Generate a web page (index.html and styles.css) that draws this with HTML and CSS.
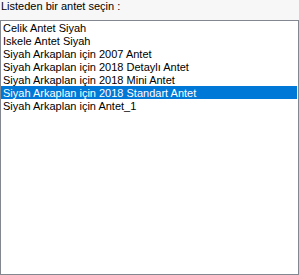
FILE: index.html
```html
<!DOCTYPE html>
<html lang="tr">
<head>
    <meta charset="UTF-8">
    <title>Antet Seçimi</title>
    <link rel="stylesheet" href="styles.css">
</head>
<body>
    <div class="panel">
        <div class="caption">Listeden bir antet seçin :</div>
        <ul class="listbox">
            <li>Celik Antet Siyah</li>
            <li>Iskele Antet Siyah</li>
            <li>Siyah Arkaplan için 2007 Antet</li>
            <li>Siyah Arkaplan için 2018 Detaylı Antet</li>
            <li>Siyah Arkaplan için 2018 Mini Antet</li>
            <li class="selected">Siyah Arkaplan için 2018 Standart Antet</li>
            <li>Siyah Arkaplan için Antet_1</li>
        </ul>
    </div>
</body>
</html>
```

FILE: styles.css
```css
body {
    margin: 0;
    background-color: #f7f7f7;
    font-family: "Liberation Sans", Arial, sans-serif;
    font-size: 11px;
    color: #000;
}
.panel {
    width: 299px;
    height: 275px;
    display: flex;
    flex-direction: column;
}
.caption {
    height: 20px;
    line-height: 13px;
    padding-left: 1px;
}
.listbox {
    list-style: none;
    margin: 0;
    padding: 0;
    width: 299px;
    height: 255px;
    box-sizing: border-box;
    border: 1px solid #828790;
    background-color: #fff;
}
.listbox li {
    height: 12px;
    line-height: 12px;
    padding-top: 1px;
    padding-left: 2px;
    margin-right: 1px;
    white-space: nowrap;
}
.listbox li.selected {
    background-color: #0078d7;
    color: #fff;
}
```
